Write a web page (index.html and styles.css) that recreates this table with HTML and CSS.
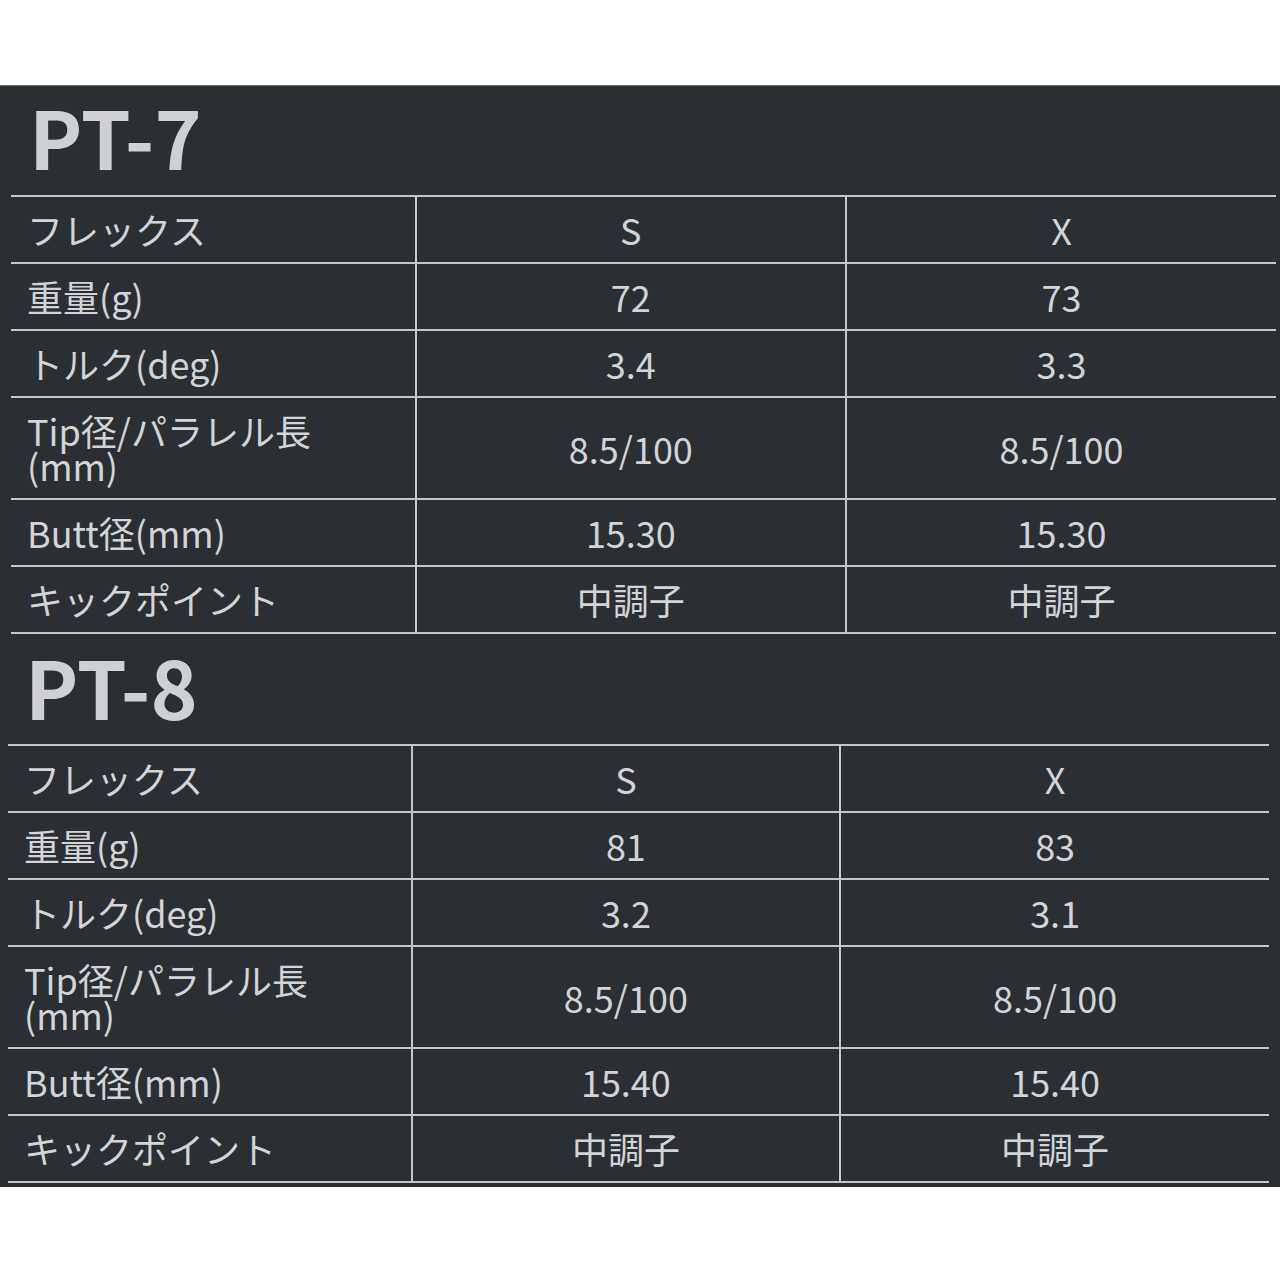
FILE: index.html
```html
<!DOCTYPE html>
<html lang="ja">
<head>
<meta charset="utf-8">
<link rel="stylesheet" href="styles.css">
</head>
<body>
<div class="panel">
  <section class="spec spec-a">
    <h2 class="model">PT-7</h2>
    <table class="grid">
      <colgroup><col class="c-label"><col class="c-val"><col class="c-val"></colgroup>
      <tr><th>フレックス</th><td>S</td><td>X</td></tr>
      <tr><th>重量(g)</th><td>72</td><td>73</td></tr>
      <tr><th>トルク(deg)</th><td>3.4</td><td>3.3</td></tr>
      <tr><th>Tip径/パラレル長<br>(mm)</th><td>8.5/100</td><td>8.5/100</td></tr>
      <tr><th>Butt径(mm)</th><td>15.30</td><td>15.30</td></tr>
      <tr><th>キックポイント</th><td>中調子</td><td>中調子</td></tr>
    </table>
  </section>
  <section class="spec spec-b">
    <h2 class="model">PT-8</h2>
    <table class="grid">
      <colgroup><col class="c-label"><col class="c-val"><col class="c-val"></colgroup>
      <tr><th>フレックス</th><td>S</td><td>X</td></tr>
      <tr><th>重量(g)</th><td>81</td><td>83</td></tr>
      <tr><th>トルク(deg)</th><td>3.2</td><td>3.1</td></tr>
      <tr><th>Tip径/パラレル長<br>(mm)</th><td>8.5/100</td><td>8.5/100</td></tr>
      <tr><th>Butt径(mm)</th><td>15.40</td><td>15.40</td></tr>
      <tr><th>キックポイント</th><td>中調子</td><td>中調子</td></tr>
    </table>
  </section>
</div>
</body>
</html>
```

FILE: styles.css
```css
html, body {
  margin: 0;
  padding: 0;
  background: #ffffff;
}
body {
  font-family: "Noto Sans CJK JP", "Noto Sans", sans-serif;
  color: #d3d4d7;
}
.panel {
  margin-top: 85px;
  background: #2b2f34;
  border-top: 1px solid #6a6d72;
  height: 1102px;
  box-sizing: border-box;
  overflow: hidden;
}
.spec-a {
  margin-left: 11px;
  margin-right: 4px;
}
.spec-b {
  margin-left: 8px;
  margin-right: 11px;
}
.model {
  margin: 0;
  font-size: 80px;
  line-height: 99px;
  font-weight: 700;
  color: #cfd0d4;
  padding: 0 0 10px 18px;
}
.spec-b .model {
  padding: 2px 0 9px 17px;
}
.grid {
  width: 100%;
  border-collapse: collapse;
  table-layout: fixed;
  border-top: 2px solid #c6c7c9;
}
.c-label { width: 32%; }
.c-val { width: 34%; }
.grid th,
.grid td {
  font-size: 36px;
  line-height: 35px;
  font-weight: 400;
  padding: 15px 16px;
  border-bottom: 2px solid #c6c7c9;
  vertical-align: middle;
}
.grid th {
  text-align: left;
  border-right: 2px solid #c6c7c9;
}
.grid td {
  text-align: center;
}
.grid td + td {
  border-left: 2px solid #c6c7c9;
}
```
